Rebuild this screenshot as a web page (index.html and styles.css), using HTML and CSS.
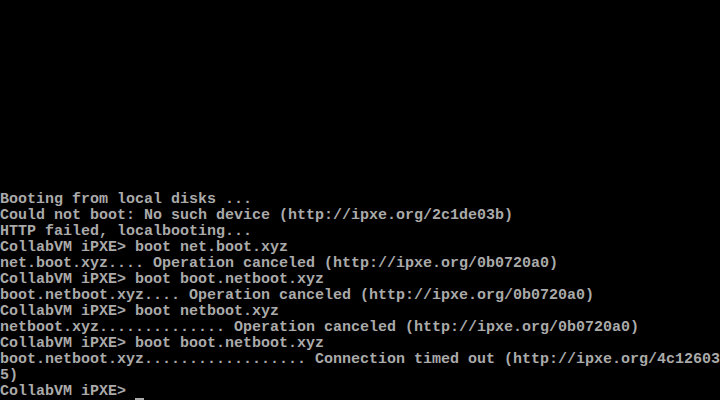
FILE: index.html
```html
<!DOCTYPE html>
<html>
<head>
<meta charset="utf-8">
<link rel="stylesheet" href="styles.css">
</head>
<body>
<div class="screen">
<pre class="console">Booting from local disks ...
Could not boot: No such device (http://ipxe.org/2c1de03b)
HTTP failed, localbooting...
CollabVM iPXE&gt; boot net.boot.xyz
net.boot.xyz.... Operation canceled (http://ipxe.org/0b0720a0)
CollabVM iPXE&gt; boot boot.netboot.xyz
boot.netboot.xyz.... Operation canceled (http://ipxe.org/0b0720a0)
CollabVM iPXE&gt; boot netboot.xyz
netboot.xyz.............. Operation canceled (http://ipxe.org/0b0720a0)
CollabVM iPXE&gt; boot boot.netboot.xyz
boot.netboot.xyz.................. Connection timed out (http://ipxe.org/4c12603
5)
CollabVM iPXE&gt; <span class="cursor"> </span></pre>
</div>
</body>
</html>
```
FILE: styles.css
```css
html, body {
  margin: 0;
  padding: 0;
  background: #000;
}
.screen {
  width: 720px;
  height: 400px;
  display: flex;
  flex-direction: column;
  justify-content: flex-end;
  overflow: hidden;
}
.console {
  margin: 0;
  font-family: "Liberation Mono", "DejaVu Sans Mono", monospace;
  font-size: 15px;
  font-weight: bold;
  line-height: 16px;
  color: #aaaaaa;
  white-space: pre;
}
.cursor {
  display: inline-block;
  width: 9px;
  height: 16px;
  vertical-align: top;
  background: linear-gradient(to bottom, transparent 14px, #aaaaaa 14px, #aaaaaa 16px, transparent 16px);
}
```
